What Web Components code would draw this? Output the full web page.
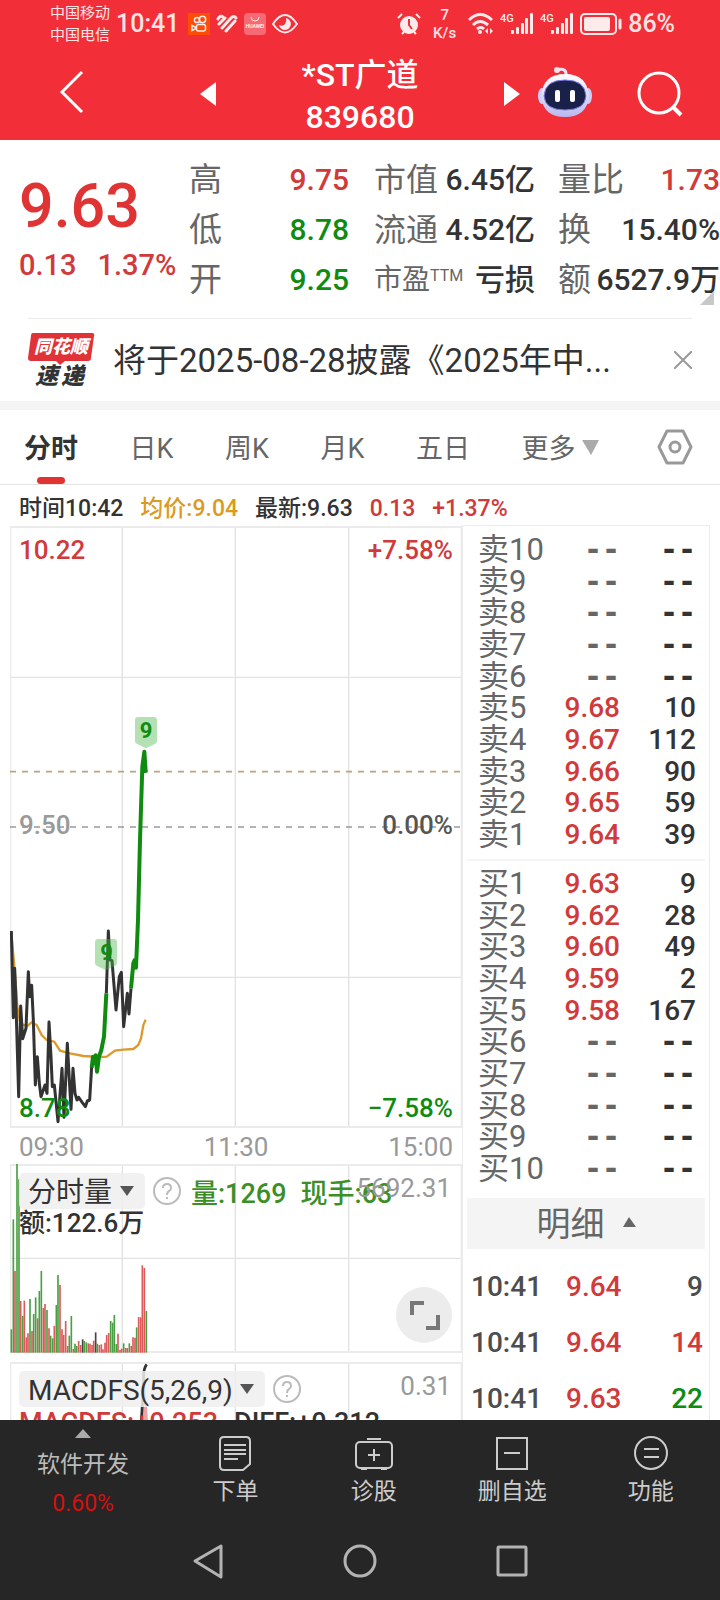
<!DOCTYPE html>
<html lang="zh-CN">
<head>
<meta charset="utf-8">
<meta name="viewport" content="width=device-width, initial-scale=1">
<title>*ST广道 839680</title>
<style>
    :root {
        --red: #e03434;
        --price: #d03a3a;
        --green: #0f8c0f;
        --ink: #333333;
        --label: #666666;
        --muted: #999999;
        --line: #ebebeb;
        --bar: #f22f38;
    }
    html, body {
        height: 100%;
    }
    body {
        margin: 0;
        background: #ffffff;
        color: var(--ink);
        font-family: Roboto, "Noto Sans CJK SC", sans-serif;
    }
</style>
</head>
<body>
<stock-app></stock-app>
<script>
const base = `
    *, *::before, *::after { box-sizing: border-box; }
    button, select { font: inherit; color: inherit; background: none; border: 0; padding: 0; margin: 0; }
    a { color: inherit; text-decoration: none; }
    svg { display: block; flex: none; }
    .red { color: var(--price); }
    .green { color: var(--green); }
`;

function define(name, html) {
    const template = document.createElement('template');
    template.innerHTML = `<style>${base}</style>${html}`;
    window.customElements.define(name, class extends HTMLElement {
        constructor() {
            super();
            this.attachShadow({mode: 'open'}).appendChild(template.content.cloneNode(true));
        }
    });
}

const signal = `
    <svg width="34" height="24" viewBox="0 0 34 24" fill="#fff" aria-hidden="true">
        <text x="0" y="10" font-size="11" font-weight="500">4G</text>
        <rect x="11" y="18" width="3" height="4" rx="1"/><rect x="16" y="15" width="3" height="7" rx="1"/>
        <rect x="21" y="11" width="3" height="11" rx="1"/><rect x="25" y="6" width="3" height="16" rx="1"/>
        <rect x="30" y="1" width="3" height="21" rx="1"/>
    </svg>`;

define('status-bar', `
    <style>
        :host { display: flex; align-items: center; justify-content: space-between; height: 48px; padding: 0 45px 0 50px; background: var(--bar); color: #ffe3e4; }
        .side { display: flex; align-items: center; gap: 6px; }
        .carrier { font-size: 15px; line-height: 22px; }
        .clock { font-size: 25px; line-height: 32px; font-weight: 500; padding-right: 3px; }
        .speed { font-size: 15px; line-height: 18px; text-align: center; font-weight: 500; margin: 0 6px; }
        .level { font-size: 25px; line-height: 32px; font-weight: 500; }
        svg { opacity: .9; }
    </style>
    <div class="side">
        <div class="carrier">中国移动<br>中国电信</div>
        <div class="clock">10:41</div>
        <svg width="22" height="22" viewBox="0 0 22 22" fill="none" stroke="#fff" stroke-width="1.500">
            <rect width="22" height="22" fill="#ff5000" stroke="none"/>
            <circle cx="9" cy="7" r="2.600"/><circle cx="14.500" cy="6.500" r="3.200"/>
            <rect x="8.500" y="11.500" width="9" height="6.500" rx="2"/><path d="M8 14.500l-4-2v5l4-2z"/>
        </svg>
        <svg width="22" height="20" viewBox="0 0 22 20" fill="none" stroke="#fff" stroke-width="3" stroke-linecap="round">
            <path d="M2 5q2-4 5-2M3 10l6-6M6 14l9-10q3-3 5 0M10 17l9-10"/>
        </svg>
        <svg width="22" height="22" viewBox="0 0 22 22">
            <rect width="22" height="22" rx="4" fill="#f7717a"/>
            <path d="M7 4a4 4 0 0 0 8 0" fill="none" stroke="#fff" stroke-width="1"/>
            <text x="11" y="15" font-size="5" font-weight="700" fill="#fff" text-anchor="middle">HUAWEI</text>
        </svg>
        <svg width="26" height="20" viewBox="0 0 26 20" fill="none" stroke="#fff" stroke-width="2">
            <path d="M1 10q12-18 24 0q-12 17-24 0z"/>
            <path d="M14 4a6 6 0 1 1-7 7q4 2 6-1t1-6z" fill="#fff" stroke="none"/>
        </svg>
    </div>
    <div class="side">
        <svg width="24" height="22" viewBox="0 0 24 22" fill="#fff">
            <circle cx="12" cy="12" r="9"/><path d="M1 5l4-4M23 5l-4-4M5 21l2-2M19 21l-2-2" stroke="#fff" stroke-width="2"/>
            <path d="M12 6v6l3 4" fill="none" stroke="#f22f38" stroke-width="2"/>
        </svg>
        <div class="speed">7<br>K/s</div>
        <svg width="26" height="24" viewBox="0 0 26 24" fill="none" stroke="#fff" stroke-width="3">
            <path d="M1 8q11-11 23 0M5 13q7-7 15 0M9 17q4-3 7 0"/><circle cx="12" cy="20" r="2" fill="#fff" stroke="none"/>
            <path d="M20 16v6l-3-3zM22 16v6l3-3z" fill="#fff" stroke="none"/>
        </svg>
        ${signal}${signal}
        <svg width="42" height="22" viewBox="0 0 42 22" fill="none" stroke="#fff">
            <rect x="1" y="1" width="35" height="20" rx="4" stroke-width="2"/>
            <rect x="4" y="4" width="26" height="14" rx="2" fill="#fff" stroke="none"/>
            <path d="M40 7v8" stroke-width="3" stroke-linecap="round"/>
        </svg>
        <div class="level">86%</div>
    </div>
`);

define('stock-header', `
    <style>
        :host { display: grid; grid-template-columns: 196px 1fr 196px; align-items: center; height: 92px; padding: 0 20px; background: var(--bar); color: #ffffff; }
        .start, .end { display: flex; align-items: center; }
        .start { padding-left: 39px; justify-content: space-between; }
        .end { padding-right: 17px; gap: 17px; }
        .end button:last-child { margin-left: auto; }
        h1 { margin: 0; padding-top: 4px; font-size: 32px; line-height: 42px; font-weight: 500; text-align: center; }
        h1 span { display: block; }
        button { display: block; }
    </style>
    <div class="start">
        <button aria-label="返回"><svg width="26" height="48" viewBox="0 0 26 48" fill="none" stroke="#fff" stroke-width="3"><path d="M23 2L3 22l20 20"/></svg></button>
        <button aria-label="上一只"><svg width="16" height="24"><path d="M16 0v24L0 12z" fill="#fff"/></svg></button>
    </div>
    <h1><span>*ST广道</span><span>839680</span></h1>
    <div class="end">
        <button aria-label="下一只"><svg width="16" height="24"><path d="M0 0v24l16-12z" fill="#fff"/></svg></button>
        <button aria-label="助手">
            <svg width="56" height="56" viewBox="0 0 56 56">
                <defs><linearGradient id="shell" x2="0" y2="1"><stop offset="0" stop-color="#fff"/><stop offset="1" stop-color="#b9b8ef"/></linearGradient></defs>
                <path d="M20 4q10-3 9 6" fill="none" stroke="#f3dfee" stroke-width="3"/><circle cx="20" cy="4" r="3" fill="#f9e4ee"/>
                <ellipse cx="5" cy="30" rx="4" ry="8" fill="#c9cdfa"/><ellipse cx="51" cy="30" rx="4" ry="8" fill="#c9cdfa"/>
                <path d="M28 8q22 0 24 22-2 21-24 21T4 30Q6 8 28 8z" fill="url(#shell)"/>
                <path d="M28 14q20 0 21 16-1 14-21 14T7 30q1-16 21-16z" fill="#1a2148" stroke="#8179e8" stroke-width="1"/>
                <rect x="18" y="24" width="5" height="12" rx="2" fill="#fff"/><rect x="33" y="24" width="5" height="12" rx="2" fill="#fff"/>
            </svg>
        </button>
        <button aria-label="搜索"><svg width="46" height="46" viewBox="0 0 46 46" fill="none" stroke="#fff" stroke-width="3"><circle cx="22" cy="22" r="20"/><path d="M35 35l9 9" stroke-width="4"/></svg></button>
    </div>
`);

define('quote-panel', `
    <style>
        :host { display: grid; grid-template-columns: 170px 160px 186px 1fr; height: 178px; padding: 15px 0 0 19px; position: relative; }
        .price { font-size: 61px; line-height: 72px; font-weight: 500; color: var(--red); padding-top: 15px; }
        .change { display: flex; gap: 21px; font-size: 29px; line-height: 36px; font-weight: 500; padding-top: 5px; }
        dl { margin: 0; font-size: 30px; line-height: 50px; }
        dl div { display: flex; justify-content: space-between; white-space: nowrap; }
        dt { color: var(--label); font-size: 33px; }
        dd { margin: 0; font-weight: 500; }
        .second { padding-left: 25px; }
        .second dt { font-size: 32px; }
        .third { padding-left: 23px; }
        .second .small { font-size: 28px; }
        sup { font-size: 16px; line-height: 16px; vertical-align: 8px; }
        .corner { position: absolute; right: 6px; bottom: 13px; }
    </style>
    <div>
        <div class="price">9.63</div>
        <div class="change red"><span>0.13</span><span>1.37%</span></div>
    </div>
    <dl>
        <div><dt>高</dt><dd class="red">9.75</dd></div>
        <div><dt>低</dt><dd class="green">8.78</dd></div>
        <div><dt>开</dt><dd class="green">9.25</dd></div>
    </dl>
    <dl class="second">
        <div><dt>市值</dt><dd>6.45亿</dd></div>
        <div><dt>流通</dt><dd>4.52亿</dd></div>
        <div><dt class="small">市盈<sup>TTM</sup></dt><dd>亏损</dd></div>
    </dl>
    <dl class="third">
        <div><dt>量比</dt><dd class="red">1.73</dd></div>
        <div><dt>换</dt><dd>15.40%</dd></div>
        <div><dt>额</dt><dd>6527.9万</dd></div>
    </dl>
    <svg class="corner" width="14" height="14"><path d="M14 0v14H0z" fill="#c8c8c8"/></svg>
`);

define('news-strip', `
    <style>
        :host { display: flex; align-items: center; height: 83px; margin: 0 28px; border-top: 1px solid var(--line); }
        .logo { margin-right: 18px; }
        a { flex: 1; min-width: 0; padding-top: 2px; font-size: 33px; line-height: 40px; white-space: nowrap; }
    </style>
    <svg class="logo" width="67" height="56" viewBox="0 0 67 56">
        <path d="M5 1h59q3 0 2 3l-3 22q0 3-3 3H37l-5 4-4-4H3q-3 0-3-3L3 4q0-3 2-3z" fill="#e03338"/>
        <text x="33" y="21" font-size="18" font-weight="900" font-style="italic" fill="#fff" text-anchor="middle">同花顺</text>
        <text x="7" y="52" font-size="23" font-weight="900" font-style="italic" fill="#333">速</text>
        <text x="33" y="52" font-size="23" font-weight="900" font-style="italic" fill="#333">递</text>
    </svg>
    <a href="#news">将于2025-08-28披露《2025年中...</a>
    <button aria-label="关闭"><svg width="18" height="18" stroke="#999" stroke-width="2"><path d="M0 0l18 18M18 0L0 18"/></svg></button>
`);

define('chart-tabs', `
    <style>
        :host { display: block; border-top: 9px solid #f4f4f4; border-bottom: 1px solid #e4e4e4; }
        nav { display: flex; align-items: center; justify-content: space-between; height: 74px; padding: 0 27px 0 24px; font-size: 27px; line-height: 36px; color: var(--label); }
        button { position: relative; height: 74px; display: flex; align-items: center; gap: 7px; padding-top: 4px; }
        .on { font-weight: 700; color: var(--ink); }
        .on::after { content: ""; position: absolute; left: 50%; bottom: 0; width: 28px; height: 7px; margin-left: -14px; border-radius: 4px; background: var(--red); }
        .gear { margin-left: 6px; padding-top: 0; }
    </style>
    <nav>
        <button class="on">分时</button>
        <button>日K</button>
        <button>周K</button>
        <button>月K</button>
        <button>五日</button>
        <button>更多<svg width="17" height="18"><path d="M0 0h17l-8 15z" fill="#aaa"/></svg></button>
        <button class="gear" aria-label="设置">
            <svg width="36" height="36" viewBox="0 0 36 36" fill="none" stroke="#999" stroke-width="3" stroke-linejoin="round"><path d="M10 2h16l8 16-8 16H10L2 18z"/><circle cx="18" cy="18" r="5"/></svg>
        </button>
    </nav>
`);

define('chart-info', `
    <style>
        :host { display: flex; gap: 17px; height: 40px; padding: 4px 19px 0; font-size: 23px; line-height: 40px; font-weight: 500; white-space: nowrap; }
        .avg { color: #dc9a1e; }
    </style>
    <span>时间10:42</span><span class="avg">均价:9.04</span><span>最新:9.63</span><span class="red">0.13</span><span class="red">+1.37%</span>
`);

// Chart drawings use three units per pixel, 1356 units across the full session.
const chartBase = `
    :host { display: grid; position: relative; }
    .plot, .labels { grid-area: 1 / 1; min-width: 0; }
    .plot { width: 100%; height: 100%; }
    .labels { position: relative; display: flex; flex-direction: column; }
`;

define('price-chart', `
    <style>
        ${chartBase}
        .plot { height: 602px; }
        .labels { justify-content: space-between; padding: 8px 9px 4px; font-size: 26px; line-height: 32px; font-weight: 500; }
        .labels div { display: flex; justify-content: space-between; }
        .mid { color: var(--muted); padding-bottom: 8px; }
        .mid span + span { color: #555555; }
        .axis { display: flex; justify-content: space-between; padding: 2px 9px 0; font-size: 26px; line-height: 34px; color: var(--muted); }
    </style>
    <svg class="plot" viewBox="30 -522 1356 1806" preserveAspectRatio="none" fill="none">
        <path d="M367-519V1281M706-519V1281M1046-519V1281M30-68H1386M30 832H1386" stroke="#e2e2e2" stroke-width="4"/>
        <rect x="31" y="-519" width="1354" height="1800" stroke="#ebebeb" stroke-width="6"/>
        <path d="M30 215H1386" stroke="#b8a67c" stroke-width="5" stroke-dasharray="18 18"/>
        <path d="M30 381H1386" stroke="#999" stroke-width="5" stroke-dasharray="18 18"/>
        <polyline stroke="#dc9a2e" stroke-width="7" points="34,700 45,820 52,920 60,965 70,975 82,978 95,967 110,975 125,1005 140,1020 163,1025 180,1052 210,1060 250,1068 300,1071 320,1070 345,1052 370,1049 400,1047 415,1035 423,1015 430,975 437,959"/>
        <g stroke="#333" stroke-width="9" stroke-linejoin="round">
            <polyline points="34,693 40,953 44,805 47,880 56,1190 62,918 68,1016 78,985 85,815 89,890 95,856 100,960 106,1155 112,1070 118,1150 123,1190 135,1155 141,1180 147,966 153,1070 157,1160 163,1155 174,1265 186,1105 192,1252 202,1030 208,1140 213,1228 219,1105 225,1180 231,1200 236,1192 247,1208 256,1220 262,1203 269,1200 275,1100"/>
            <polyline points="319,880 325,693 330,780 336,782 348,930 358,830 364,817 371,980 382,880 387,942 393,865"/>
        </g>
        <g stroke="#0f8c0f" stroke-width="12" stroke-linejoin="round">
            <polyline points="275,1103 279,1070 283,1090 287,1066 291,1115 297,1070 304,1050 312,1010 319,880"/>
            <polyline points="393,865 400,790 404,780 408,803 414,660 420,420 427,200 433,155 437,213 431,213 433,160"/>
        </g>
        <g fill="#4db84d" fill-opacity=".42">
            <path d="M295 717h46q10 0 10 10v62q0 8-8 10l-25 12-25-12q-8-2-8-10v-62q0-10 10-10z"/>
            <path d="M415 51h46q10 0 10 10v62q0 8-8 10l-25 12-25-12q-8-2-8-10v-62q0-10 10-10z"/>
        </g>
        <g fill="#0f8c0f" font-size="66" font-weight="700" text-anchor="middle"><text x="320" y="781">9</text><text x="438" y="115">9</text></g>
    </svg>
    <div class="labels">
        <div><span class="red">10.22</span><span class="red">+7.58%</span></div>
        <div class="mid"><span>9.50</span><span>0.00%</span></div>
        <div class="green"><span>8.78</span><span>−7.58%</span></div>
    </div>
    <div class="axis"><span>09:30</span><span>11:30</span><span>15:00</span></div>
`);

const bars = '34,628g 40,298g 45,453r 51,132g 57,178g 62,543r 68,588g 73,542r 79,652r 84,640r 90,537g 96,633r 101,582g 107,532g 113,595r 118,513g 124,453g 130,564r 135,552r 141,570g 147,625r 152,647g 158,655g 163,618r 169,555g 174,465g 180,495r 186,628r 191,645r 197,603r 203,678r 208,647g 214,588g 220,687r 225,671g 230,678g 236,663r 242,675r 248,658k 253,663g 259,667g 265,670r 270,671r 276,675r 281,662r 287,637k 292,671g 298,675r 304,673r 309,688r 315,668r 320,645r 326,639r 332,603g 338,608g 343,585g 349,672g 354,641r 360,690r 365,686r 371,670g 377,684r 382,684r 388,670g 394,678r 399,652r 405,653r 410,622g 416,591r 422,592r 427,436r 433,444r 439,573g';
const barColors = {g: '#4ba043', r: '#dc5a5a', k: '#444444'};
const drawBars = () => bars.split(' ').map((bar) => {
    const [x, top] = bar.slice(0, -1).split(',');
    return `<path d="M${x} ${top}V698" stroke="${barColors[bar.slice(-1)]}"/>`;
}).join('');

const indicator = `
    .head { display: flex; align-items: center; height: 36px; }
    .pick { position: relative; display: flex; align-items: center; background: rgba(238, 238, 238, .85); border-radius: 5px; }
    select { appearance: none; height: 36px; padding: 2px 32px 0 9px; font-size: 28px; font-weight: 500; }
    .light select { font-weight: 400; }
    .pick svg { position: absolute; right: 11px; pointer-events: none; }
    .help { margin: 0 10px 0 8px; }
    .top { color: var(--muted); position: absolute; right: 11px; top: 8px; line-height: 32px; font-size: 26px; }
`;
const arrow = '<svg width="14" height="10"><path d="M0 0h14l-7 10z" fill="#555"/></svg>';
const help = `<button class="help" aria-label="说明"><svg width="28" height="28" fill="none" stroke="#bbb" stroke-width="2"><circle cx="14" cy="14" r="13"/><path d="M10 11q0-4 4-4t4 4q0 2-2 3t-2 4M14 20v2"/></svg></button>`;

define('volume-chart', `
    <style>
        ${chartBase}${indicator}
        :host { height: 189px; }
        .labels { padding: 9px; }
        .figure { font-size: 27px; font-weight: 500; color: #3c8f26; white-space: nowrap; margin-right: 14px; }
        .amount { font-size: 26px; line-height: 28px; font-weight: 500; }
        .expand { position: absolute; right: 10px; bottom: 10px; }
    </style>
    <svg class="plot" viewBox="30 132 1356 567" preserveAspectRatio="none" fill="none">
        <path d="M367 132V699M706 132V699M1046 132V699M30 415H1386" stroke="#e2e2e2" stroke-width="4"/>
        <rect x="31" y="135" width="1354" height="561" stroke="#ebebeb" stroke-width="6"/>
        <g stroke-width="5">${drawBars()}</g>
    </svg>
    <div class="labels">
        <span class="top">5692.31</span>
        <div class="head">
            <div class="pick light"><select aria-label="指标"><option>分时量</option></select>${arrow}</div>
            ${help}
            <span class="figure">量:1269</span><span class="figure">现手:63</span>
        </div>
        <div class="amount">额:122.6万</div>
        <button class="expand" aria-label="全屏"><svg width="56" height="56" fill="none" stroke="#777" stroke-width="4"><circle cx="28" cy="28" r="28" fill="#ececec" stroke="none"/><path d="M16 28V16h12M42 28v13H30"/></svg></button>
    </div>
`);

define('macd-chart', `
    <style>
        ${chartBase}${indicator}
        :host { height: 189px; margin-top: 9px; }
        .labels { padding: 9px; }
        .values { display: flex; gap: 16px; font-size: 27px; line-height: 32px; font-weight: 500; }
    </style>
    <svg class="plot" viewBox="30 726 1356 567" preserveAspectRatio="none" fill="none">
        <path d="M367 726V1293M706 726V1293M1046 726V1293" stroke="#e2e2e2" stroke-width="4"/>
        <rect x="31" y="729" width="1354" height="561" stroke="#ebebeb" stroke-width="6"/>
    </svg>
    <div class="labels">
        <span class="top">0.31</span>
        <div class="head">
            <div class="pick light"><select aria-label="指标"><option>MACDFS(5,26,9)</option></select>${arrow}</div>
            ${help}
        </div>
        <div class="values"><span class="red">MACDFS:+0.253</span><span>DIFF:+0.312</span></div>
    </div>
    <svg class="plot" viewBox="30 726 1356 567" preserveAspectRatio="none" fill="none" style="pointer-events: none">
        <path d="M433 770l-11 130h22z" fill="#e03434" fill-opacity=".45"/>
        <path d="M440 733q-9 12-9 35l-3 70-4 62" stroke="#333" stroke-width="8"/>
    </svg>
`);

const asks = [['卖10'], ['卖9'], ['卖8'], ['卖7'], ['卖6'], ['卖5', '9.68', 10], ['卖4', '9.67', 112], ['卖3', '9.66', 90], ['卖2', '9.65', 59], ['卖1', '9.64', 39]];
const bids = [['买1', '9.63', 9], ['买2', '9.62', 28], ['买3', '9.60', 49], ['买4', '9.59', 2], ['买5', '9.58', 167], ['买6'], ['买7'], ['买8'], ['买9'], ['买10']];
const bookRow = ([name, price, count]) => price
    ? `<tr><th scope="row">${name}</th><td class="red">${price}</td><td>${count}</td></tr>`
    : `<tr class="none"><th scope="row">${name}</th><td>--</td><td>--</td></tr>`;

define('order-book', `
    <style>
        :host { display: block; padding: 8px 4px 0; }
        table { width: 100%; height: 317px; border-collapse: collapse; table-layout: fixed; font-size: 28px; line-height: 28px; }
        th, td { padding: 0; white-space: nowrap; }
        th { width: 68px; padding-left: 11px; font-size: 31px; font-weight: 400; text-align: left; color: var(--label); }
        td { font-weight: 500; text-align: right; }
        td:last-child { padding-right: 9px; }
        .none td { font-family: "DejaVu Sans Mono", monospace; font-size: 30px; font-weight: 700; }
        .none td:nth-child(2) { color: var(--label); }
        hr { height: 2px; margin: 8px 0 7px; border: 0; background: #f4f4f4; }
    </style>
    <table aria-label="卖盘">${asks.map(bookRow).join('')}</table>
    <hr>
    <table aria-label="买盘">${bids.map(bookRow).join('')}</table>
`);

define('trade-list', `
    <style>
        :host { display: block; padding: 13px 4px 0; }
        button { display: flex; align-items: center; justify-content: center; gap: 18px; width: 100%; height: 51px; background: #f4f4f4; color: var(--label); font-size: 34px; line-height: 44px; }
        table { width: 100%; margin-top: 10px; border-collapse: collapse; table-layout: fixed; font-size: 28px; line-height: 56px; font-weight: 500; }
        td { padding: 0; color: #4d4d4d; }
        td:first-child { width: 99px; padding-left: 4px; }
        td:last-child { padding-right: 2px; text-align: right; }
        td.red { color: var(--price); }
        td.green { color: var(--green); }
    </style>
    <button>明细<svg width="13" height="14"><path d="M0 10h13L6 0z" fill="#666"/></svg></button>
    <table aria-label="明细">
        <tr><td>10:41</td><td class="red">9.64</td><td>9</td></tr>
        <tr><td>10:41</td><td class="red">9.64</td><td class="red">14</td></tr>
        <tr><td>10:41</td><td class="red">9.63</td><td class="green">22</td></tr>
    </table>
`);

define('app-nav', `
    <style>
        :host { display: block; background: #262626; color: #cccccc; }
        nav { display: grid; grid-template-columns: 6fr 5fr 5fr 5fr 5fr; height: 100px; font-size: 23px; line-height: 28px; text-align: center; }
        a { display: flex; flex-direction: column; align-items: center; padding-top: 16px; gap: 7px; }
        .index { padding-top: 9px; gap: 11px; color: #bbbbbb; }
        .index b { font-weight: 400; color: #d60f0f; }
        .index .name { padding-top: 2px; }
    </style>
    <nav>
        <a class="index" href="#index"><svg width="16" height="9"><path d="M0 9h16L8 0z" fill="#aaa"/></svg><span class="name">软件开发</span><b>0.60%</b></a>
        <a href="#order"><svg width="32" height="35" viewBox="0 0 32 35" fill="none" stroke="#ccc" stroke-width="2"><path d="M5 1h22q4 0 4 4v23l-7 6H5q-4 0-4-4V5q0-4 4-4zM5 9h22M5 14h22M5 18h22M5 23h14"/></svg>下单</a>
        <a href="#check"><svg width="38" height="35" viewBox="0 0 38 35" fill="none" stroke="#ccc" stroke-width="2"><path d="M12 3h14M19 13v12M13 19h12M6 33h6M26 33h6"/><rect x="1" y="6" width="36" height="26" rx="4"/></svg>诊股</a>
        <a href="#remove"><svg width="34" height="35" viewBox="0 0 34 35" fill="none" stroke="#ccc" stroke-width="2"><path d="M2 2h30v31H2zM9 17h16"/></svg>删自选</a>
        <a href="#more"><svg width="34" height="35" viewBox="0 0 34 35" fill="none" stroke="#ccc" stroke-width="2"><circle cx="17" cy="17" r="16"/><path d="M10 13h15M10 21h15"/></svg>功能</a>
    </nav>
`);

define('system-nav', `
    <style>
        :host { display: flex; align-items: center; justify-content: center; gap: 118px; height: 80px; padding-top: 2px; background: #262626; }
        * { box-sizing: border-box; }
        button { display: block; }
    </style>
    <button aria-label="返回"><svg width="34" height="36" viewBox="0 0 34 36" fill="none" stroke="#b3b3b3" stroke-width="3" stroke-linejoin="round"><path d="M30 3v31L4 18z"/></svg></button>
    <button aria-label="主页"><svg width="34" height="34" fill="none" stroke="#b3b3b3" stroke-width="3"><circle cx="17" cy="17" r="15"/></svg></button>
    <button aria-label="任务"><svg width="34" height="34" fill="none" stroke="#b3b3b3" stroke-width="3"><rect x="3" y="3" width="28" height="28" rx="1"/></svg></button>
`);

define('stock-app', `
    <style>
        :host { display: flex; flex-direction: column; height: 100vh; }
        status-bar, stock-header, quote-panel, chart-info, system-nav { box-sizing: border-box; flex: none; }
        main { flex: 1; min-height: 0; overflow: hidden; }
        .market { display: grid; grid-template-columns: 462fr 248fr; margin-right: 10px; }
        .charts { padding: 1px 0 0 10px; }
        .depth { border: 1px solid var(--line); }
    </style>
    <status-bar></status-bar>
    <stock-header></stock-header>
    <main>
        <quote-panel></quote-panel>
        <news-strip></news-strip>
        <chart-tabs></chart-tabs>
        <chart-info></chart-info>
        <div class="market">
            <div class="charts">
                <price-chart></price-chart>
                <volume-chart></volume-chart>
                <macd-chart></macd-chart>
            </div>
            <div class="depth">
                <order-book></order-book>
                <trade-list></trade-list>
            </div>
        </div>
    </main>
    <app-nav></app-nav>
    <system-nav></system-nav>
`);
</script>
</body>
</html>
